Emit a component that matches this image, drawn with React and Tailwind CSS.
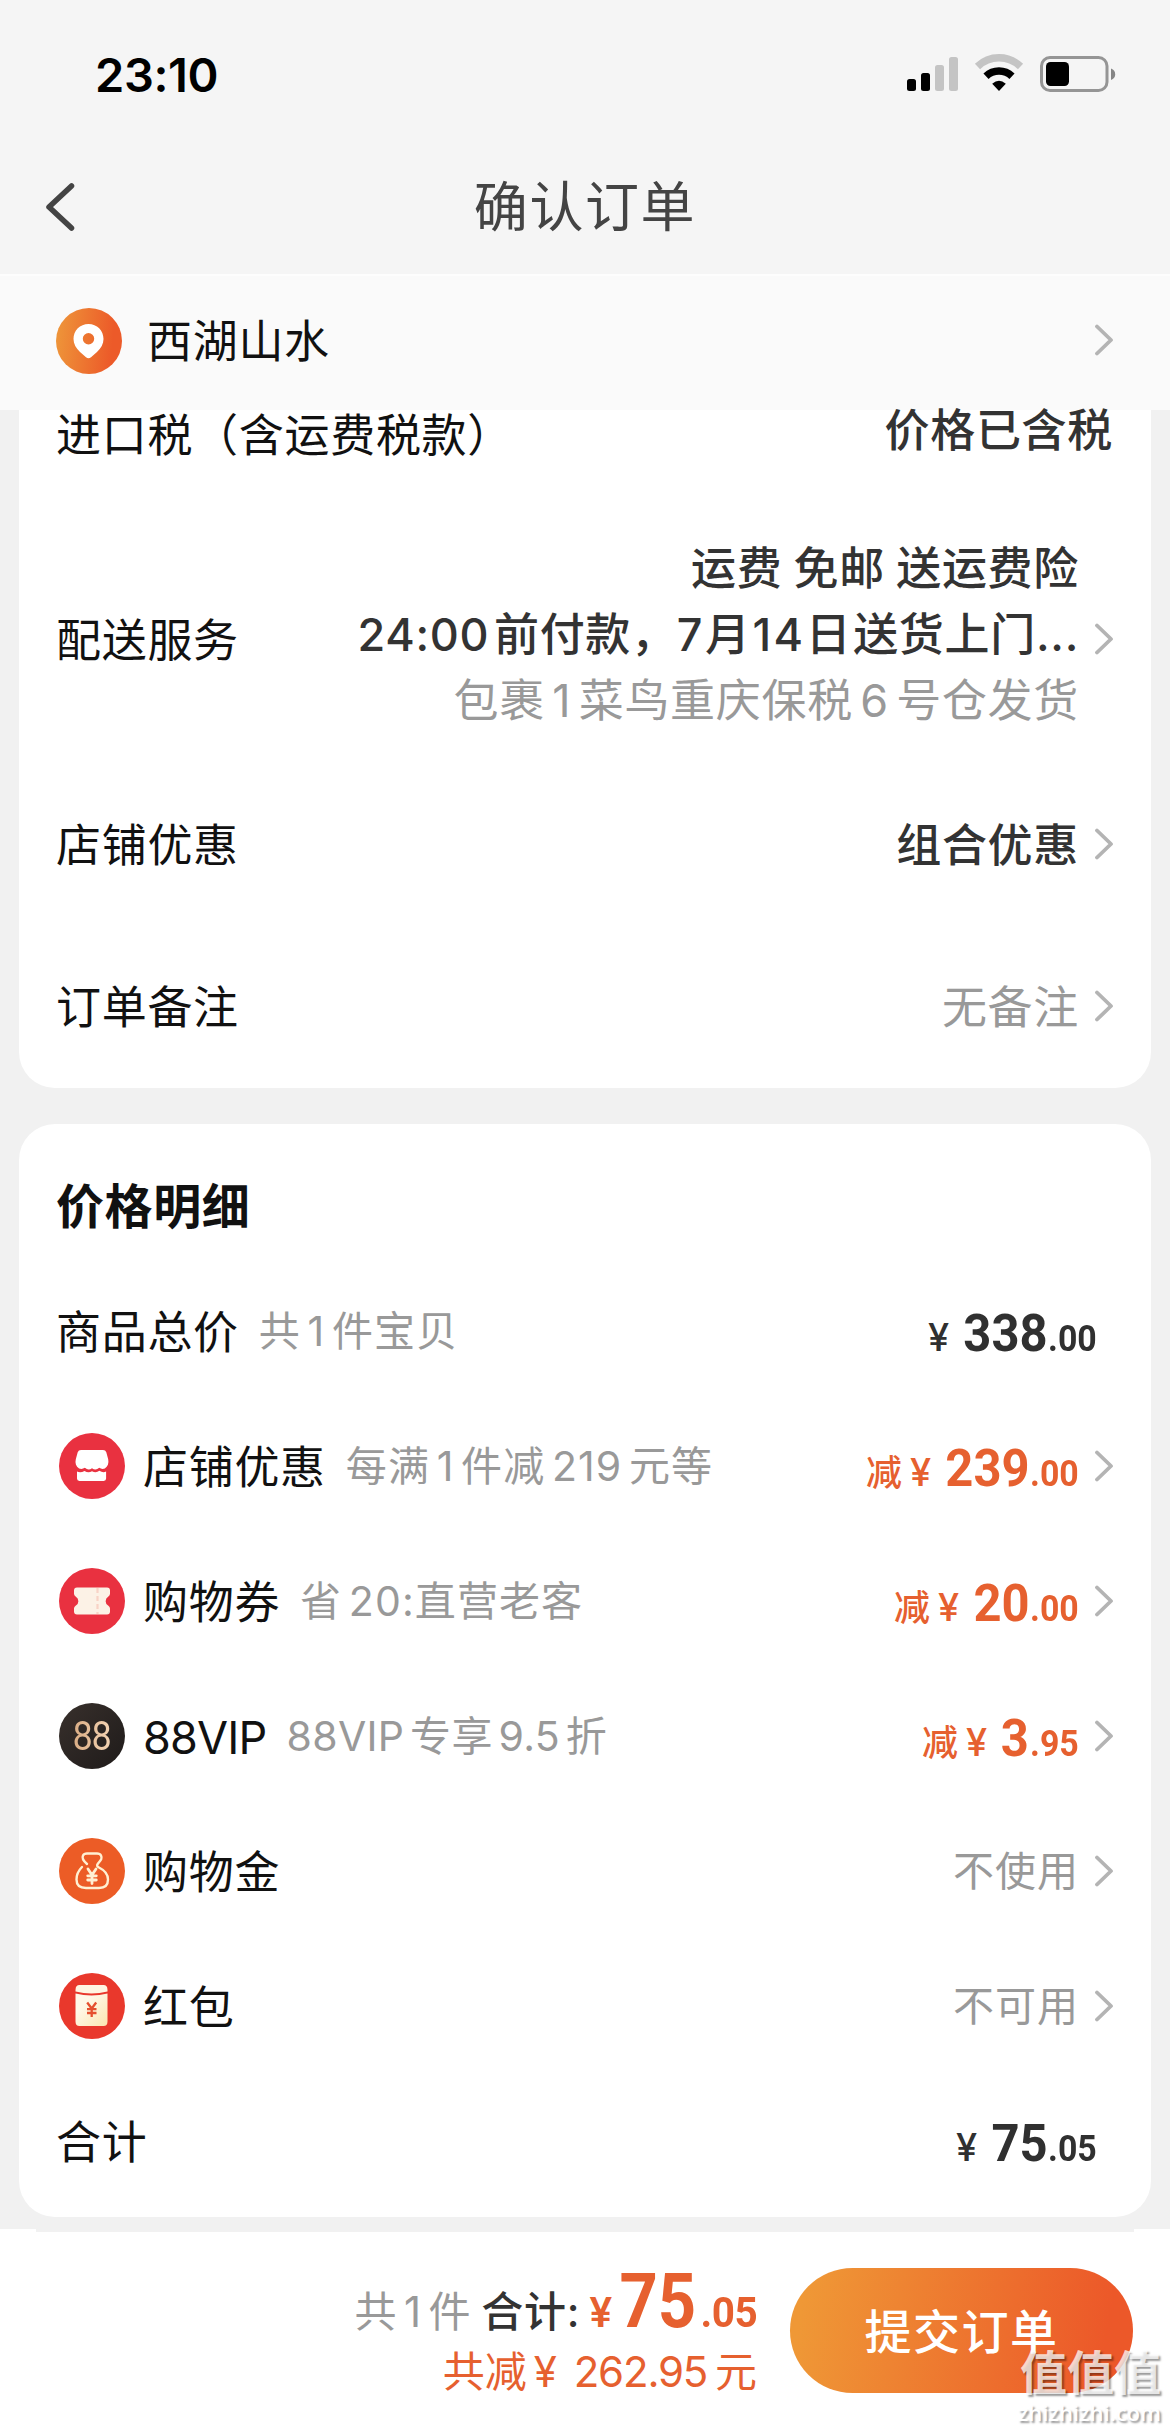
import React from "react";

const Chevron = () => (
  <svg className="mb-[2px] ml-[16px] h-[34px] w-[20px] shrink-0" viewBox="0 0 20 34" fill="none" stroke="#b4b4b4" strokeWidth="3.8" strokeLinecap="round" strokeLinejoin="round">
    <path d="M2 3.5 16 17 2 30.5" />
  </svg>
);

const StatusIcons = () => (
  <svg className="h-[40px] w-[210px]" viewBox="906 54 210 40">
    <rect x="907" y="79" width="9" height="12" rx="2.5" />
    <rect x="921" y="73" width="9" height="18" rx="2.5" />
    <rect x="935" y="65" width="9" height="26" rx="2.5" fill="#c4c4c4" />
    <rect x="949" y="57" width="9" height="34" rx="2.5" fill="#c4c4c4" />
    <path d="M977.5 66.5a31 31 0 0 1 43 0" fill="none" stroke="#c4c4c4" strokeWidth="7.5" />
    <path d="M986 76.2a19 19 0 0 1 26 0" fill="none" stroke="#000" strokeWidth="7.5" />
    <path d="M999 91l-6.8-7.2q6.800-6.200 13.600 0z" />
    <rect x="1041.500" y="57.500" width="65.500" height="33" rx="8.500" fill="none" stroke="#959595" strokeWidth="3" />
    <rect x="1046" y="62" width="23" height="24" rx="4.500" />
    <path d="M1111 68.500q4.200 1.600 4.200 5.700t-4.200 5.700z" fill="#858585" />
  </svg>
);

const PinIcon = () => (
  <svg className="h-[66px] w-[66px]" viewBox="0 0 66 66">
    <defs>
      <linearGradient id="pin" x1="0" y1="0" x2="1" y2="0.1">
        <stop offset="0.05" stopColor="#ee9439" />
        <stop offset="0.9" stopColor="#ec5a29" />
      </linearGradient>
    </defs>
    <circle cx="33" cy="33" r="33" fill="url(#pin)" />
    <path fillRule="evenodd" fill="#fff" d="M32.500 16C24 16 17.500 22.500 17.500 31c0 5 2.500 9.200 6.500 13l6 5.200q2.500 1.900 5 0l6-5.200c4-3.800 6.500-8 6.500-13 0-8.500-6.500-15-15-15zm0 9a5.700 5.700 0 1 1 0 11.400 5.700 5.700 0 0 1 0-11.400z" />
  </svg>
);

const ShopIcon = () => (
  <svg className="h-[66px] w-[66px]" viewBox="0 0 66 66">
    <circle cx="33" cy="33" r="33" fill="#e93140" />
    <path fill="#fff" d="M22 17h22q2.500 0 3.300 2.300l1.900 6.900c.8 4-.4 7.300-3.400 9.300q-3 1.100-5.600-.7-3.500 3.300-7.200.4-3.600 2.900-7.100-.4-3 1.800-5.800.6c-3.200-2-4.200-5.300-3.300-9.200l1.900-6.900Q19.500 17 22 17z" />
    <path fill="#fff" d="M18 38.500q3.500 1.600 7.500-.6 3.800 2.400 7.500.3 3.900 2.100 7.400-.4 3.400 2.200 6.700.8v7q0 2.400-2.400 2.400H20.400Q18 48 18 45.600z" />
  </svg>
);

const TicketIcon = () => (
  <svg className="h-[66px] w-[66px]" viewBox="0 0 66 66">
    <circle cx="33" cy="33" r="33" fill="#e93140" />
    <path fill="#fcf2e6" d="M18 19.500h30q3 0 3 3v3.200q0 1.800-1.600 2.800a5.300 5.300 0 0 0 0 9.300Q51 38.800 51 40.500v3q0 3-3 3H18q-3 0-3-3v-3q0-1.700 1.600-2.700a5.300 5.300 0 0 0 0-9.300Q15 27.500 15 25.700v-3.200q0-3 3-3z" />
    <path d="M38.500 20v26" stroke="#f8d3c6" strokeWidth="2.200" strokeDasharray="5 3" />
  </svg>
);

const VipIcon = () => (
  <div className="flex h-[66px] w-[66px] items-center justify-center rounded-full bg-linear-to-br from-[#38302c] to-[#1f1b1a]">
    <span className="inline-block scale-x-88 bg-linear-to-r from-[#d9ac84] to-[#f3d3b3] bg-clip-text text-[41px] leading-[46px] tracking-[-1.500px] text-transparent [font-family:Roboto,sans-serif]">88</span>
  </div>
);

const BagIcon = () => (
  <svg className="h-[66px] w-[66px]" viewBox="0 0 66 66" fill="none" stroke="#fff0d2" strokeLinecap="round" strokeLinejoin="round">
    <circle cx="33" cy="33" r="33" fill="#ec5c26" stroke="none" />
    <path strokeWidth="2.400" d="M28 26C24.500 23 22.500 20.500 24 17.500q1-2 4-2h10q3 0 4 2c1.500 3 0 4.500-3 8-1.500 2-1 3 1 4 5 2.500 9 7 9 12 0 6-3.500 8.500-9 8.500H27c-6 0-9.500-3-9.500-8.500 0-5 2-9 5.500-12.500" />
    <path strokeWidth="2.800" d="m29 31 4 6 4-6M33 37v8.500M28.700 37.800h8.600M28.700 42h8.600" />
  </svg>
);

const PacketIcon = () => (
  <svg className="h-[66px] w-[66px]" viewBox="0 0 66 66" fill="none">
    <defs>
      <linearGradient id="packet" x1="0" y1="0" x2="1" y2="1">
        <stop offset="0.3" stopColor="#fff8e8" />
        <stop offset="1" stopColor="#fbe6b0" />
      </linearGradient>
    </defs>
    <circle cx="33" cy="33" r="33" fill="#e9382c" />
    <path fill="#fff5e2" d="M20.500 12h24q4 0 4 5v1.500q-16 4-32 0V17q0-5 4-5z" />
    <path fill="url(#packet)" d="M16.500 20.500q16 4 32 0v28q0 4.500-4 4.500h-24q-4 0-4-4.500z" />
    <path stroke="#e5502f" strokeWidth="2.300" d="m28.200 29.500 4.500 6 4.500-6M32.700 35.500V44M28 36.200h9.500M28 40h9.500" />
  </svg>
);

/* Digits are condensed horizontally, so the left margin takes back the unused width. */
const Price = ({ int, dec, reduce }) => (
  <span className={`flex items-baseline pt-[5px] font-bold leading-none ${reduce ? "text-[#e6602f]" : "text-[#303030]"}`}>
    {reduce && <span className="mr-[8px] text-[36px] font-medium">减</span>}
    <span className="text-[38px] font-medium">¥</span>
    <span
      className="inline-block origin-right scale-x-94 text-[52px] [font-family:Roboto,sans-serif]"
      style={{ marginLeft: 14 - int.length * 1.8 }}
    >
      {int}
    </span>
    <span className="-ml-[2px] inline-block origin-right scale-x-94 text-[36px] [font-family:Roboto,sans-serif]">{dec}</span>
  </span>
);

const rows = [
  { icon: ShopIcon, label: "店铺优惠", note: "每满 1 件减 219 元等", price: ["239", ".00"] },
  { icon: TicketIcon, label: "购物券", note: "省 20:直营老客", price: ["20", ".00"] },
  { icon: VipIcon, label: "88VIP", note: "88VIP 专享 9.5 折", price: ["3", ".95"], tight: true },
  { icon: BagIcon, label: "购物金", value: "不使用" },
  { icon: PacketIcon, label: "红包", value: "不可用" },
];

const Label = ({ children, tight }) => (
  <span className={`pt-[1px] text-[45px] leading-none text-[#111] ${tight ? "tracking-[-0.800px]" : "tracking-[0.700px]"}`}>{children}</span>
);
const Note = ({ children, tight }) => (
  <span className={`ml-[20px] text-[41px] leading-none text-[#999] [word-spacing:-6px] ${tight ? "tracking-[0.300px]" : "tracking-[1.100px]"}`}>{children}</span>
);

export default function App() {
  return (
    <div className="flex h-[2430px] w-[1170px] flex-col overflow-hidden bg-[#f1f1f1] [font-family:Inter,'Noto_Sans_CJK_SC',sans-serif]">
      <header className="flex h-[274px] shrink-0 flex-col bg-[#f5f5f5]">
        <div className="flex h-[148px] items-center justify-between pr-[54px] pl-[95px]">
          <span className="text-[47px] leading-none font-semibold tracking-[-0.400px] text-black">23:10</span>
          <StatusIcons />
        </div>
        <div className="grid h-[118px] grid-cols-[120px_1fr_120px] items-center">
          <svg className="ml-[43px] h-[52px] w-[34px]" viewBox="0 0 34 52" fill="none" stroke="#444" strokeWidth="5.500" strokeLinecap="round" strokeLinejoin="round">
            <path d="M28.500 5 6 26l22.500 21" />
          </svg>
          <h1 className="pt-[2px] text-center text-[54px] leading-none tracking-[1.600px] text-[#444]">确认订单</h1>
        </div>
      </header>

      <div className="flex h-[136px] shrink-0 items-center border-t-2 border-[#fdfdfd] bg-[#fafafa] pr-[55px] pb-[4px] pl-[56px]">
        <PinIcon />
        <span className="ml-[25px] flex-1 text-[45px] leading-none tracking-[0.700px] text-[#111]">西湖山水</span>
        <Chevron />
      </div>

      <main className="flex flex-col px-[19px]">
        <section className="flex h-[678px] flex-col rounded-b-[36px] bg-white pr-[36px] pl-[37px]">
          <div className="flex h-[50px] items-center justify-between">
            <Label>进口税（含运费税款）</Label>
            <span className="pr-[2px] pb-[10px] text-[45px] leading-none font-medium tracking-[0.700px] text-[#333]">价格已含税</span>
          </div>
          <div className="flex h-[360px] items-center">
            <Label>配送服务</Label>
            <div className="flex flex-1 flex-col items-end pb-[10px] text-[45px] leading-[66px] tracking-[0.700px] whitespace-nowrap">
              <span className="font-medium text-[#333] [word-spacing:-1.500px]">运费 免邮 送运费险</span>
              <span className="font-medium text-[#333] [word-spacing:-8px]">
                24:00 前付款，<span className="tracking-[2.500px]">7月14日</span>送货上门...
              </span>
              <span className="text-[#999] [word-spacing:-6px]">包裹 1 菜鸟重庆保税 6 号仓发货</span>
            </div>
            <Chevron />
          </div>
          <div className="flex h-[50px] items-center">
            <Label>店铺优惠</Label>
            <span className="flex-1 pt-[1px] text-right text-[45px] leading-none font-medium tracking-[0.700px] text-[#333]">组合优惠</span>
            <Chevron />
          </div>
          <div className="mt-[112px] flex h-[50px] items-center">
            <Label>订单备注</Label>
            <span className="flex-1 pt-[1px] text-right text-[45px] leading-none tracking-[0.700px] text-[#999]">无备注</span>
            <Chevron />
          </div>
        </section>

        <section className="mt-[36px] flex h-[1093px] flex-col rounded-[36px] bg-white pr-[36px] pl-[37px]">
          <h2 className="mt-[59px] flex h-[48px] items-center text-[48px] leading-none font-bold tracking-[0.600px] text-[#111]">价格明细</h2>
          <div className="mt-[33px] flex h-[135px] items-center">
            <Label>商品总价</Label>
            <Note>共 1 件宝贝</Note>
            <div className="flex flex-1 justify-end pr-[18px]">
              <Price int="338" dec=".00" />
            </div>
          </div>
          {rows.map(({ icon: Icon, label, note, price, value, tight }) => (
            <div key={label} className="flex h-[135px] items-center">
              <div className="mr-[18px] mb-[2px] ml-[3px]">
                <Icon />
              </div>
              <Label tight={tight}>{label}</Label>
              {note && <Note tight={tight}>{note}</Note>}
              <div className="flex flex-1 justify-end">
                {price ? <Price reduce int={price[0]} dec={price[1]} /> : <span className="text-[41px] leading-none tracking-[1px] text-[#999]">{value}</span>}
              </div>
              <Chevron />
            </div>
          ))}
          <div className="flex h-[135px] items-center">
            <Label>合计</Label>
            <div className="flex flex-1 justify-end pr-[18px]">
              <Price int="75" dec=".05" />
            </div>
          </div>
        </section>
      </main>

      <footer className="relative mt-[12px] flex flex-1 flex-col bg-white">
        <div className="mx-[36px] h-[3px] bg-[#f1f1f1]" />
        <div className="flex justify-end pt-[36px] pr-[37px]">
          <div className="-mt-[2px] mr-[33px] flex flex-col items-end">
            <div className="flex items-baseline leading-[70px]">
              <span className="text-[42px] tracking-[0.800px] text-[#999] [word-spacing:-6px]">共 1 件</span>
              <span className="ml-[10px] text-[42px] font-medium tracking-[0.800px] text-[#333]">合计:</span>
              <span className="ml-[9px] text-[41px] font-semibold text-[#e6602f]">¥</span>
              <span className="-ml-[3px] inline-block origin-right scale-x-88 text-[76px] font-bold text-[#e6602f] [font-family:Roboto,sans-serif]">75</span>
              <span className="inline-block origin-right scale-x-94 text-[43px] font-bold tracking-[-0.500px] text-[#e6602f] [font-family:Roboto,sans-serif]">.05</span>
            </div>
            <span className="-mt-[5px] text-[42px] leading-[60px] text-[#e6602f] [word-spacing:-4px]">
              共减<span className="mr-[9px] ml-[7px]">¥</span> <span className="tracking-[-1.200px]">262.95</span> 元
            </span>
          </div>
          <button className="flex h-[125px] w-[343px] items-center justify-center rounded-full bg-linear-[100deg] from-[#ef9836] from-5% to-[#ec5829] to-90% pt-[2px] text-[47px] leading-none font-medium tracking-[1.500px] text-white">
            提交订单
          </button>
        </div>
        <div className="absolute right-[9px] bottom-[4px] flex flex-col items-end text-white [text-shadow:2px_2px_2px_rgba(0,0,0,0.4)]">
          <span className="text-[47px] leading-[50px] font-bold text-white/75">值值值</span>
          <span className="text-[22px] leading-[28px] font-semibold [font-family:'Open_Sans',sans-serif]">zhizhizhi.com</span>
        </div>
      </footer>
    </div>
  );
}
